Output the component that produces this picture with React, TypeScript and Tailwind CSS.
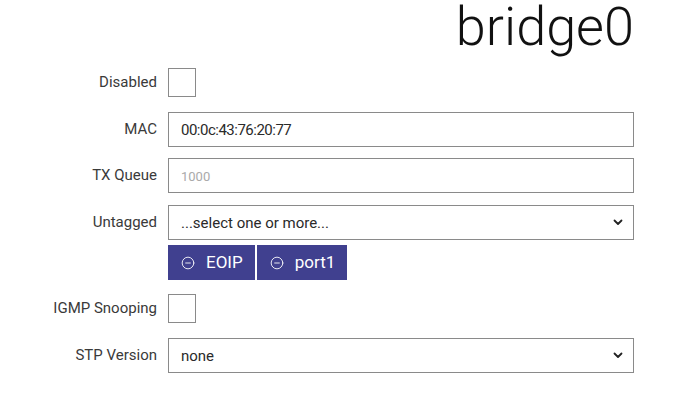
import { CircleMinus } from "lucide-react";

const Chevron = () => (
  <svg width="10" height="7" viewBox="0 0 10 7" fill="none" aria-hidden="true">
    <path d="M1.5 1.5 5 5l3.5-3.5" stroke="#222" strokeWidth="1.8" strokeLinecap="round" strokeLinejoin="round" />
  </svg>
);

function Row({ label, className, children }: { label: string; className?: string; children: React.ReactNode }) {
  return (
    <div className={`flex items-center ${className ?? ""}`}>
      <div className="w-[157px] shrink-0 text-right text-[15px] text-[#3a3a3a]">{label}</div>
      <div className="ml-[11px] w-[466px]">{children}</div>
    </div>
  );
}

function Box({ children, select }: { children?: React.ReactNode; select?: boolean }) {
  return (
    <div className="flex h-[35px] items-center justify-between border border-[#8a8a8a] bg-white pl-[12px] pr-[10px]">
      <span>{children}</span>
      {select && <Chevron />}
    </div>
  );
}

const Check = () => <div className="h-[29px] w-[28px] border border-[#8a8a8a] bg-white" />;

export default function App() {
  return (
    <div className="h-[420px] w-[698px] bg-white font-['Roboto',sans-serif] text-[#222]">
      <div className="-mt-[5px] w-[634px] text-right text-[54px] font-light leading-[64px] text-[#111]">bridge0</div>

      <div className="mt-[9px] flex flex-col">
        <Row label="Disabled">
          <Check />
        </Row>
        <Row label="MAC" className="mt-[15px]">
          <Box>
            <span className="text-[15px] tracking-[-0.5px] text-[#2a2a2a]">00:0c:43:76:20:77</span>
          </Box>
        </Row>
        <Row label="TX Queue" className="mt-[11px]">
          <Box>
            <span className="text-[13px] text-[#aaa]">1000</span>
          </Box>
        </Row>
        <Row label="Untagged" className="mt-[12px]">
          <Box select>
            <span className="text-[15px] text-[#2a2a2a]">...select one or more...</span>
          </Box>
        </Row>
        <Row label="" className="mt-[5px]">
          <div className="flex gap-[2px]">
            {["EOIP", "port1"].map((c) => (
              <div
                key={c}
                className="flex h-[35px] items-center gap-[11px] bg-[#40408f] pl-[13px] pr-[12px] text-[17px] text-white"
              >
                <CircleMinus size={14} strokeWidth={1.5} />
                {c}
              </div>
            ))}
          </div>
        </Row>
        <Row label="IGMP Snooping" className="mt-[14px]">
          <Check />
        </Row>
        <Row label="STP Version" className="mt-[15px]">
          <Box select>
            <span className="text-[15px] text-[#2a2a2a]">none</span>
          </Box>
        </Row>
      </div>
    </div>
  );
}
